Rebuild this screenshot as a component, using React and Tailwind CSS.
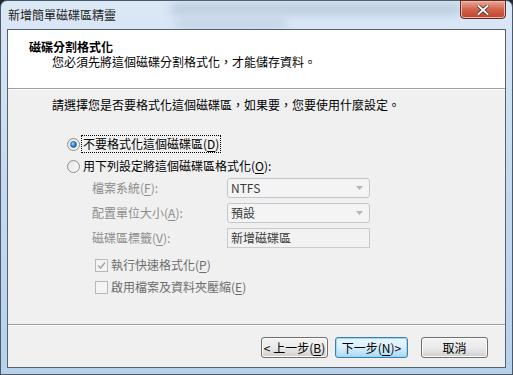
const FONT = "font-['Noto_Sans_CJK_TC','Noto_Sans_CJK_SC','Liberation_Sans',sans-serif]";

function Radio({ checked }) {
  return (
    <span className="w-[13px] h-[13px] rounded-full border border-[#8f8f8f] bg-gradient-to-br from-[#e6e6e6] to-[#fafafa] flex items-center justify-center shrink-0">
      {checked && (
        <span className="w-[7px] h-[7px] rounded-full bg-[radial-gradient(circle_at_35%_35%,#9fe0ff,#1f76c2_60%,#0d4f8c)] border border-[#2a6aa8]" />
      )}
    </span>
  );
}

function Check({ checked }) {
  return (
    <span className="w-[13px] h-[13px] border border-[#b8b8b8] bg-[#f4f4f4] flex items-center justify-center shrink-0">
      {checked && (
        <svg width="9" height="9" viewBox="0 0 9 9">
          <path d="M1 4.5 L3.5 7 L8 1.5" fill="none" stroke="#a8a8a8" strokeWidth="1.6" />
        </svg>
      )}
    </span>
  );
}

function Mn({ c }) {
  return (
    <span>
      (<span className="underline underline-offset-2">{c}</span>)
    </span>
  );
}

function Combo({ value }) {
  return (
    <div className="w-[143px] h-[20px] border border-[#c3c7cb] rounded-[3px] bg-[#f4f4f4] flex items-center justify-between pl-[3px] pr-[6px] text-[#3b3b3b]">
      <span>{value}</span>
      <svg width="7" height="4" viewBox="0 0 7 4">
        <path d="M0 0 H7 L3.5 4 Z" fill="#b5b5b5" />
      </svg>
    </div>
  );
}

function Button({ children, primary }) {
  return (
    <div
      className={
        "h-[21px] rounded-[3px] border flex items-center justify-center text-black " +
        (primary
          ? "w-[73px] border-[#3c7fb1] bg-gradient-to-b from-[#eaf6fd] via-[#d9f0fc] to-[#a7d9f5] shadow-[inset_0_0_0_1px_#9ed6f7]"
          : "w-[67px] border-[#707070] bg-gradient-to-b from-[#f2f2f2] via-[#ebebeb] to-[#cfcfcf] shadow-[inset_0_0_0_1px_#fcfcfc]")
      }
    >
      {children}
    </div>
  );
}

export default function App() {
  return (
    <div className={"w-[513px] h-[375px] relative overflow-hidden bg-[#1f2a35] text-[12px] leading-[16px] " + FONT}>
      <div className="absolute inset-0 rounded-t-[7px] border border-[#4c5a68] bg-gradient-to-b from-[#dbe8f6] via-[#c4d9ef] to-[#b7d1ec] flex flex-col">
        {/* blurred desktop behind the glass */}
        <div className="absolute left-[170px] top-[2px] w-[290px] h-[12px] bg-[#8fa6bf] opacity-40 blur-[5px]" />
        <div className="absolute left-[175px] top-[20px] w-[110px] h-[6px] bg-[#8fa6bf] opacity-40 blur-[4px]" />

        {/* title bar */}
        <div className="h-[28px] flex items-center pl-[7px] relative text-[#1b1b1b]">新增簡單磁碟區精靈</div>
        <div className="absolute top-[-1px] right-[6px] w-[46px] h-[19px] rounded-b-[4px] border border-[#5c2d24] bg-gradient-to-b from-[#e7a898] via-[#d3624b] to-[#c0422c] flex items-center justify-center shadow-[inset_0_0_0_1px_#f0b9ab]">
          <svg width="12" height="10" viewBox="0 0 12 10">
            <path d="M1.5 1 L10.5 9 M10.5 1 L1.5 9" stroke="#4a1f18" strokeWidth="3.4" strokeLinecap="square" />
            <path d="M1.5 1 L10.5 9 M10.5 1 L1.5 9" stroke="#ffffff" strokeWidth="2" strokeLinecap="square" />
          </svg>
        </div>

        {/* client area */}
        <div className="relative ml-[6px] mr-[6px] mb-[6px] flex-1 border border-[#56626e] bg-[#f0f0f0] flex flex-col text-black">
          <div className="h-[58px] bg-white pl-[21px] pt-[9px] flex flex-col">
            <div className="font-bold">磁碟分割格式化</div>
            <div className="pl-[23px] mt-[-1px]">您必須先將這個磁碟分割格式化，才能儲存資料。</div>
          </div>
          <div className="h-px bg-[#a0a0a0]" />
          <div className="h-px bg-white" />

          <div className="h-[234px] flex flex-col pl-[44px] pt-[7px]">
            <div>請選擇您是否要格式化這個磁碟區，如果要，您要使用什麼設定。</div>

            <div className="mt-[23px] ml-[15px] flex items-center gap-[2px] h-[16px]">
              <Radio checked />
              <span className="outline-1 outline-dotted outline-[#000] px-[1px]">
                不要格式化這個磁碟區<Mn c="D" />
              </span>
            </div>
            <div className="mt-[6px] ml-[15px] flex items-center gap-[3px] h-[16px]">
              <Radio />
              <span>
                用下列設定將這個磁碟區格式化<Mn c="O" />:
              </span>
            </div>

            <div className="mt-[4px] ml-[40px] flex flex-col gap-[5px] text-[#8d8d8d]">
              <div className="flex items-center h-[20px]">
                <span className="w-[135px]">
                  檔案系統<Mn c="F" />:
                </span>
                <Combo value="NTFS" />
              </div>
              <div className="flex items-center h-[20px]">
                <span className="w-[135px]">
                  配置單位大小<Mn c="A" />:
                </span>
                <Combo value="預設" />
              </div>
              <div className="flex items-center h-[20px]">
                <span className="w-[135px]">
                  磁碟區標籤<Mn c="V" />:
                </span>
                <div className="w-[143px] h-[20px] border border-[#c8cbce] bg-[#f2f2f2] pl-[3px] flex items-center text-[#3b3b3b]">
                  新增磁碟區
                </div>
              </div>
            </div>

            <div className="mt-[10px] ml-[43px] flex flex-col gap-[8px] text-[#6d6d6d]">
              <div className="flex items-center gap-[3px] h-[14px]">
                <Check checked />
                <span>
                  執行快速格式化<Mn c="P" />
                </span>
              </div>
              <div className="flex items-center gap-[3px] h-[14px]">
                <Check />
                <span>
                  啟用檔案及資料夾壓縮<Mn c="E" />
                </span>
              </div>
            </div>
          </div>

          <div className="h-px bg-[#a0a0a0]" />
          <div className="h-px bg-white" />

          <div className="flex-1 flex items-start pt-[11px] pl-[253px]">
            <Button>
              &lt; 上一步<Mn c="B" />
            </Button>
            <div className="ml-[7px]">
              <Button primary>
                下一步<Mn c="N" /> &gt;
              </Button>
            </div>
            <div className="ml-[13px]">
              <Button>取消</Button>
            </div>
          </div>
        </div>
      </div>
    </div>
  );
}
